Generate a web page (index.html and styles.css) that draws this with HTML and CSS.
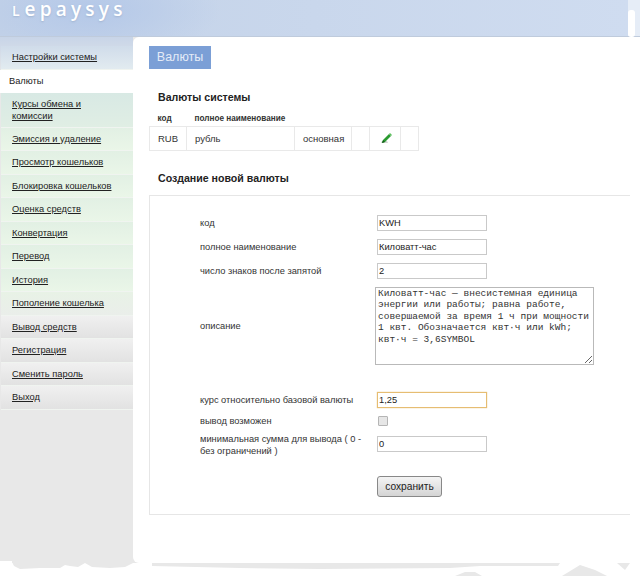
FILE: index.html
```html
<!DOCTYPE html>
<html lang="ru">
<head>
  <meta charset="UTF-8">
  <title>Валюты</title>
  <link rel="stylesheet" href="styles.css">
</head>
<body>
  <div class="page">
    <div class="header">
      <span class="logo"><span class="logo-cap">L</span>epaysys</span>
      <span class="notch"></span>
    </div>
    <div class="main">
      <ul class="menu">
        <li class="m1"><a href="#">Настройки системы</a></li>
        <li class="active">Валюты</li>
        <li class="m2"><a href="#">Курсы обмена и комиссии</a></li>
        <li class="m3"><a href="#">Эмиссия и удаление</a></li>
        <li class="m3"><a href="#">Просмотр кошельков</a></li>
        <li class="m3"><a href="#">Блокировка кошельков</a></li>
        <li class="m3"><a href="#">Оценка средств</a></li>
        <li class="m3"><a href="#">Конвертация</a></li>
        <li class="m3"><a href="#">Перевод</a></li>
        <li class="m3"><a href="#">История</a></li>
        <li class="m4"><a href="#">Пополение кошелька</a></li>
        <li class="m5"><a href="#">Вывод средств</a></li>
        <li class="m5"><a href="#">Регистрация</a></li>
        <li class="m5"><a href="#">Сменить пароль</a></li>
        <li class="m5"><a href="#">Выход</a></li>
      </ul>
      <div class="content">
        <div class="tab">Валюты</div>
        <h3 class="first">Валюты системы</h3>
        <table class="cur">
          <thead>
            <tr>
              <th class="c1">код</th>
              <th class="c2">полное наименование</th>
              <th class="c3"></th>
              <th class="c4"></th>
              <th class="c5"></th>
              <th class="c6"></th>
            </tr>
          </thead>
          <tbody>
            <tr>
              <td class="rub">RUB</td>
              <td>рубль</td>
              <td>основная</td>
              <td></td>
              <td class="edit">
                <svg width="14" height="14" viewBox="0 0 14 14">
                  <path d="M1 12h7l-1-2H2z" fill="#cfd4cf"/>
                  <path d="M2 12l1-3 6-6 2 2-6 6z" fill="#2a9a30"/>
                  <path d="M9 3l1-1 2 2-1 1z" fill="#5cc05f"/>
                  <path d="M2 12l1-3 2 2z" fill="#145c1a"/>
                </svg>
              </td>
              <td></td>
            </tr>
          </tbody>
        </table>
        <h3 class="second">Создание новой валюты</h3>
        <div class="box">
          <div class="row r-input">
            <label>код</label>
            <input class="text" type="text" value="KWH">
          </div>
          <div class="row r-input">
            <label>полное наименование</label>
            <input class="text" type="text" value="Киловатт-час">
          </div>
          <div class="row r-input">
            <label>число знаков после запятой</label>
            <input class="text" type="text" value="2">
          </div>
          <div class="row r-area">
            <label>описание</label>
            <textarea class="area">Киловатт-час — внесистемная единица энергии или работы; равна работе, совершаемой за время 1 ч при мощности 1 квт. Обозначается квт·ч или kWh; квт·ч = 3,6SYMBOL</textarea>
          </div>
          <div class="row r-input">
            <label>курс относительно базовой валюты</label>
            <input class="text focus" type="text" value="1,25">
          </div>
          <div class="row r-check">
            <label>вывод возможен</label>
            <span class="check"></span>
          </div>
          <div class="row r-min">
            <label>минимальная сумма для вывода ( 0 - без ограничений )</label>
            <input class="text" type="text" value="0">
          </div>
          <div class="row r-btn">
            <label></label>
            <button class="save" type="button">сохранить</button>
          </div>
        </div>
      </div>
    </div>
    <svg class="torn" width="640" height="16" viewBox="0 0 640 16">
      <path d="M0 1H12V3H0Z" fill="#fff"/>
      <path d="M12 2L14 6 20 9 40 8 60 8 65 5 70 6 78 7 85 3 92 7 110 8 125 7 133 3V2Z" fill="#e8e8e8"/>
      <path d="M152 3H560L558 6H480L450 8 320 9 240 8 152 6Z" fill="#e8e8e8"/>
      <path d="M455 16L465 12 475 12 482 16Z" fill="#e8e8e8"/>
      <path d="M562 16L580 5 595 10 607 16Z" fill="#e8e8e8"/>
      <path d="M617 3H630L625 10Z" fill="#e8e8e8"/>
    </svg>
  </div>
</body>
</html>
```

FILE: styles.css
```css
* { box-sizing: border-box; }
html, body { margin: 0; padding: 0; }
body { font-family: "Liberation Sans", Arial, sans-serif; font-size: 9.3px; color: #333; background: #fff; }

.page { position: relative; width: 640px; height: 576px; overflow: hidden; }

.header { position: relative; width: 640px; height: 37px; padding: 0 0 0 12px; border-bottom: 1px solid #bfcbdc; background: radial-gradient(ellipse 130px 50px at 90px 10px, #b4c8e8, transparent), linear-gradient(90deg, #c3d2e8, #cfdcf0 628px, #e6edf7 628px); }
.logo { display: block; font-family: "Open Sans", sans-serif; font-size: 19px; font-weight: 600; letter-spacing: 4.2px; line-height: 18px; color: #fff; text-shadow: 0 1px 2px #9fb3d0; }
.logo-cap { font-size: 14px; letter-spacing: 5px; }
.notch { position: absolute; top: 10px; left: 628px; width: 7px; height: 27px; background: #fff; border-radius: 3px; }

.main { display: flex; align-items: flex-start; width: 628px; height: 526px; background: #e8e8e8; }

.menu { flex: none; list-style: none; width: 133px; margin: 0; padding: 9px 0 0 1px; font-size: 9.3px; background: linear-gradient(#c8d5e8, #e8e8e8 40px); }
.menu li { height: 23.5px; padding: 0 0 0 11px; line-height: 23px; border-bottom: 1px solid #f0f4f0; }
.menu a { color: #222; text-decoration: underline; }
.menu .m1 { background: linear-gradient(#d0dcea, #e2ebf0); }
.menu .m2 { height: 34.5px; padding: 5px 30px 0 11px; line-height: 12px; background: linear-gradient(#d8e9e4, #e0eee4); }
.menu .m3 { background: linear-gradient(#e2f0e4, #eaf6e8); }
.menu .m4 { background: linear-gradient(#e8f2e6, #eaeeea); }
.menu .m5 { background: linear-gradient(#f0f0f0, #e2e2e2); }
.menu .active { margin: 0 -1px 0 -1px; padding-left: 9px; background: #fff; color: #222; border: 0; }

.content { flex: none; width: 495px; height: 526px; padding: 9px 0 0 16px; background: #fff; border-radius: 6px 0 0 6px; }

.tab { width: 62px; height: 23px; background: #7b9fd6; color: #e4ebf7; font-size: 12.5px; line-height: 23px; text-align: center; }

h3 { margin: 0; padding-left: 9px; font-size: 10.6px; line-height: 14px; color: #222; }
h3.first { margin-top: 21px; }
h3.second { margin-top: 20px; }

.cur { width: 269px; margin-top: 8px; border-collapse: collapse; table-layout: fixed; }
.cur th { height: 14px; padding: 0 0 0 8px; font-size: 8.2px; text-align: left; color: #333; }
.cur td { height: 24px; padding: 0 0 0 8px; border: 1px solid #e9e9e9; font-size: 9.5px; }
.cur td.edit { padding: 2px 0 0 10px; }
.cur .c1 { width: 37px; }
.cur .c2 { width: 108px; }
.cur .c3 { width: 57px; }
.cur .c4 { width: 18px; }
.cur .c5 { width: 31px; }
.cur .c6 { width: 18px; }

.box { width: 481px; height: 320px; margin-top: 10px; padding-top: 15px; border: 1px solid #e6e6e6; border-right: 0; }

.row { display: flex; align-items: center; padding-left: 50px; }
.row label { display: block; width: 177px; flex: none; font-size: 9.3px; line-height: 12px; color: #333; }
.r-input { height: 24px; }
.r-area { height: 86px; margin-bottom: 19px; }
.r-check { height: 18px; }
.r-min { height: 28px; }
.r-min label { padding-top: 2px; }
.r-btn { margin-top: 18px; }

.text { width: 110px; height: 16px; padding: 0 1px; border: 1px solid #c9c9c9; font: 9.3px "Liberation Sans", Arial, sans-serif; color: #222; background: #fff; }
.focus { border-color: #e6bd72; box-shadow: 0 0 1px #e6bd72; }
.area { display: block; width: 219px; height: 78px; margin-left: -2px; padding: 0 2px; border: 1px solid #b9b9b9; font: 9.5px/11.5px "Liberation Mono", monospace; color: #333; }
.check { display: block; width: 10px; height: 10px; margin-left: 1px; background: #e6e6e6; border: 1px solid #b5b5b5; border-radius: 1px; }
.save { width: 65px; height: 21px; padding: 0; border: 1px solid #888; border-radius: 3px; background: linear-gradient(#f4f4f4, #d4d4d4); font: 10.2px "Liberation Sans", Arial, sans-serif; color: #222; }

.torn { display: block; position: absolute; left: 0; top: 560px; }
```
